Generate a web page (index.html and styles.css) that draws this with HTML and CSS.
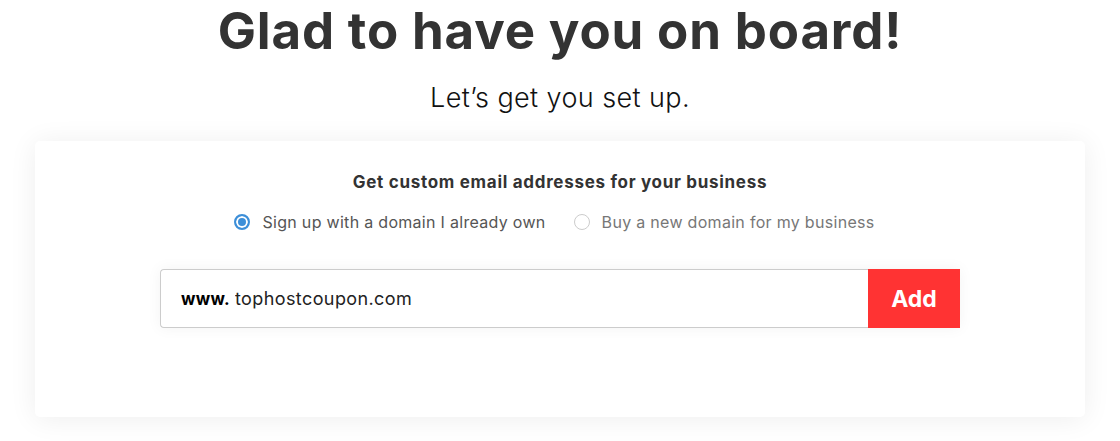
FILE: index.html
```html
<!DOCTYPE html>
<html lang="en">
<head>
  <meta charset="UTF-8">
  <meta name="viewport" content="width=device-width, initial-scale=1.0">
  <title>Welcome - Set up</title>
  <link rel="stylesheet" href="styles.css">
</head>
<body>
  <div class="page">
    <h1>Glad to have you on board!</h1>
    <p class="lead">Let’s get you set up.</p>

    <div class="card">
      <h3>Get custom email addresses for your business</h3>

      <div class="choices">
        <label class="choice">
          <input type="radio" name="domainType" value="own" checked>
          <span>Sign up with a domain I already own</span>
        </label>
        <label class="choice muted">
          <input type="radio" name="domainType" value="new">
          <span>Buy a new domain for my business</span>
        </label>
      </div>

      <form class="domain-form">
        <div class="domain-field">
          <span class="prefix">www.</span>
          <input type="text" id="domain" value="tophostcoupon.com">
        </div>
        <button type="submit">Add</button>
      </form>
    </div>
  </div>
</html>
```

FILE: styles.css
```css
body {
  margin: 0;
  background: #fff;
  font-family: Inter, Lato, Arial, sans-serif;
  color: #333;
}
.page {
  width: 1050px;
  margin: 0 auto;
  padding-bottom: 24px;
}
h1 {
  margin: 0;
  padding-top: 1px;
  text-align: center;
  font-size: 51px;
  line-height: 60px;
  font-weight: 700;
  letter-spacing: 0.85px;
  color: #333;
}
.lead {
  margin: 20px 0 0;
  text-align: center;
  font-size: 27px;
  line-height: 34px;
  font-weight: 300;
  letter-spacing: 0.4px;
  color: #111;
}
.card {
  margin-top: 26px;
  height: 276px;
  background: #fff;
  border-radius: 5px;
  box-shadow: 0 2px 28px rgba(0,0,0,0.07);
  padding-top: 30px;
  box-sizing: border-box;
}
.card h3 {
  margin: 0;
  text-align: center;
  font-size: 17px;
  line-height: 22px;
  font-weight: 700;
  letter-spacing: 0.7px;
  color: #333;
}
.choices {
  display: flex;
  justify-content: center;
  gap: 28px;
  margin-top: 18px;
  padding-right: 11px;
}
.choice {
  display: flex;
  align-items: center;
  gap: 12px;
  font-size: 16px;
  line-height: 22px;
  letter-spacing: 0.3px;
  color: #555;
  cursor: pointer;
}
.choice.muted {
  color: #777;
}
.choice input {
  appearance: none;
  margin: 0;
  width: 16px;
  height: 16px;
  border: 1px solid #ccc;
  border-radius: 50%;
  background: #fff;
  box-sizing: border-box;
}
.choice input:checked {
  border: 2px solid #3d8fd8;
  background: #3d8fd8;
  box-shadow: inset 0 0 0 2px #fff;
}
.domain-form {
  display: flex;
  width: 800px;
  height: 59px;
  margin: 36px auto 0;
  box-shadow: 0 0 14px rgba(0,0,0,0.05);
}
.domain-field {
  flex: 1;
  display: flex;
  align-items: center;
  border: 1px solid #ccc;
  border-right: none;
  border-radius: 4px 0 0 4px;
  padding-left: 20px;
  font-size: 17px;
  letter-spacing: 0.3px;
}
.prefix {
  font-weight: 700;
  color: #000;
  margin-right: 5px;
}
.domain-field input {
  flex: 1;
  border: none;
  outline: none;
  padding: 0;
  font-family: inherit;
  font-size: 18px;
  letter-spacing: 0.4px;
  color: #222;
}
.domain-form button {
  width: 92px;
  border: none;
  background: #ff3333;
  color: #fff;
  font-family: inherit;
  font-size: 23px;
  font-weight: 700;
  cursor: pointer;
}
```
